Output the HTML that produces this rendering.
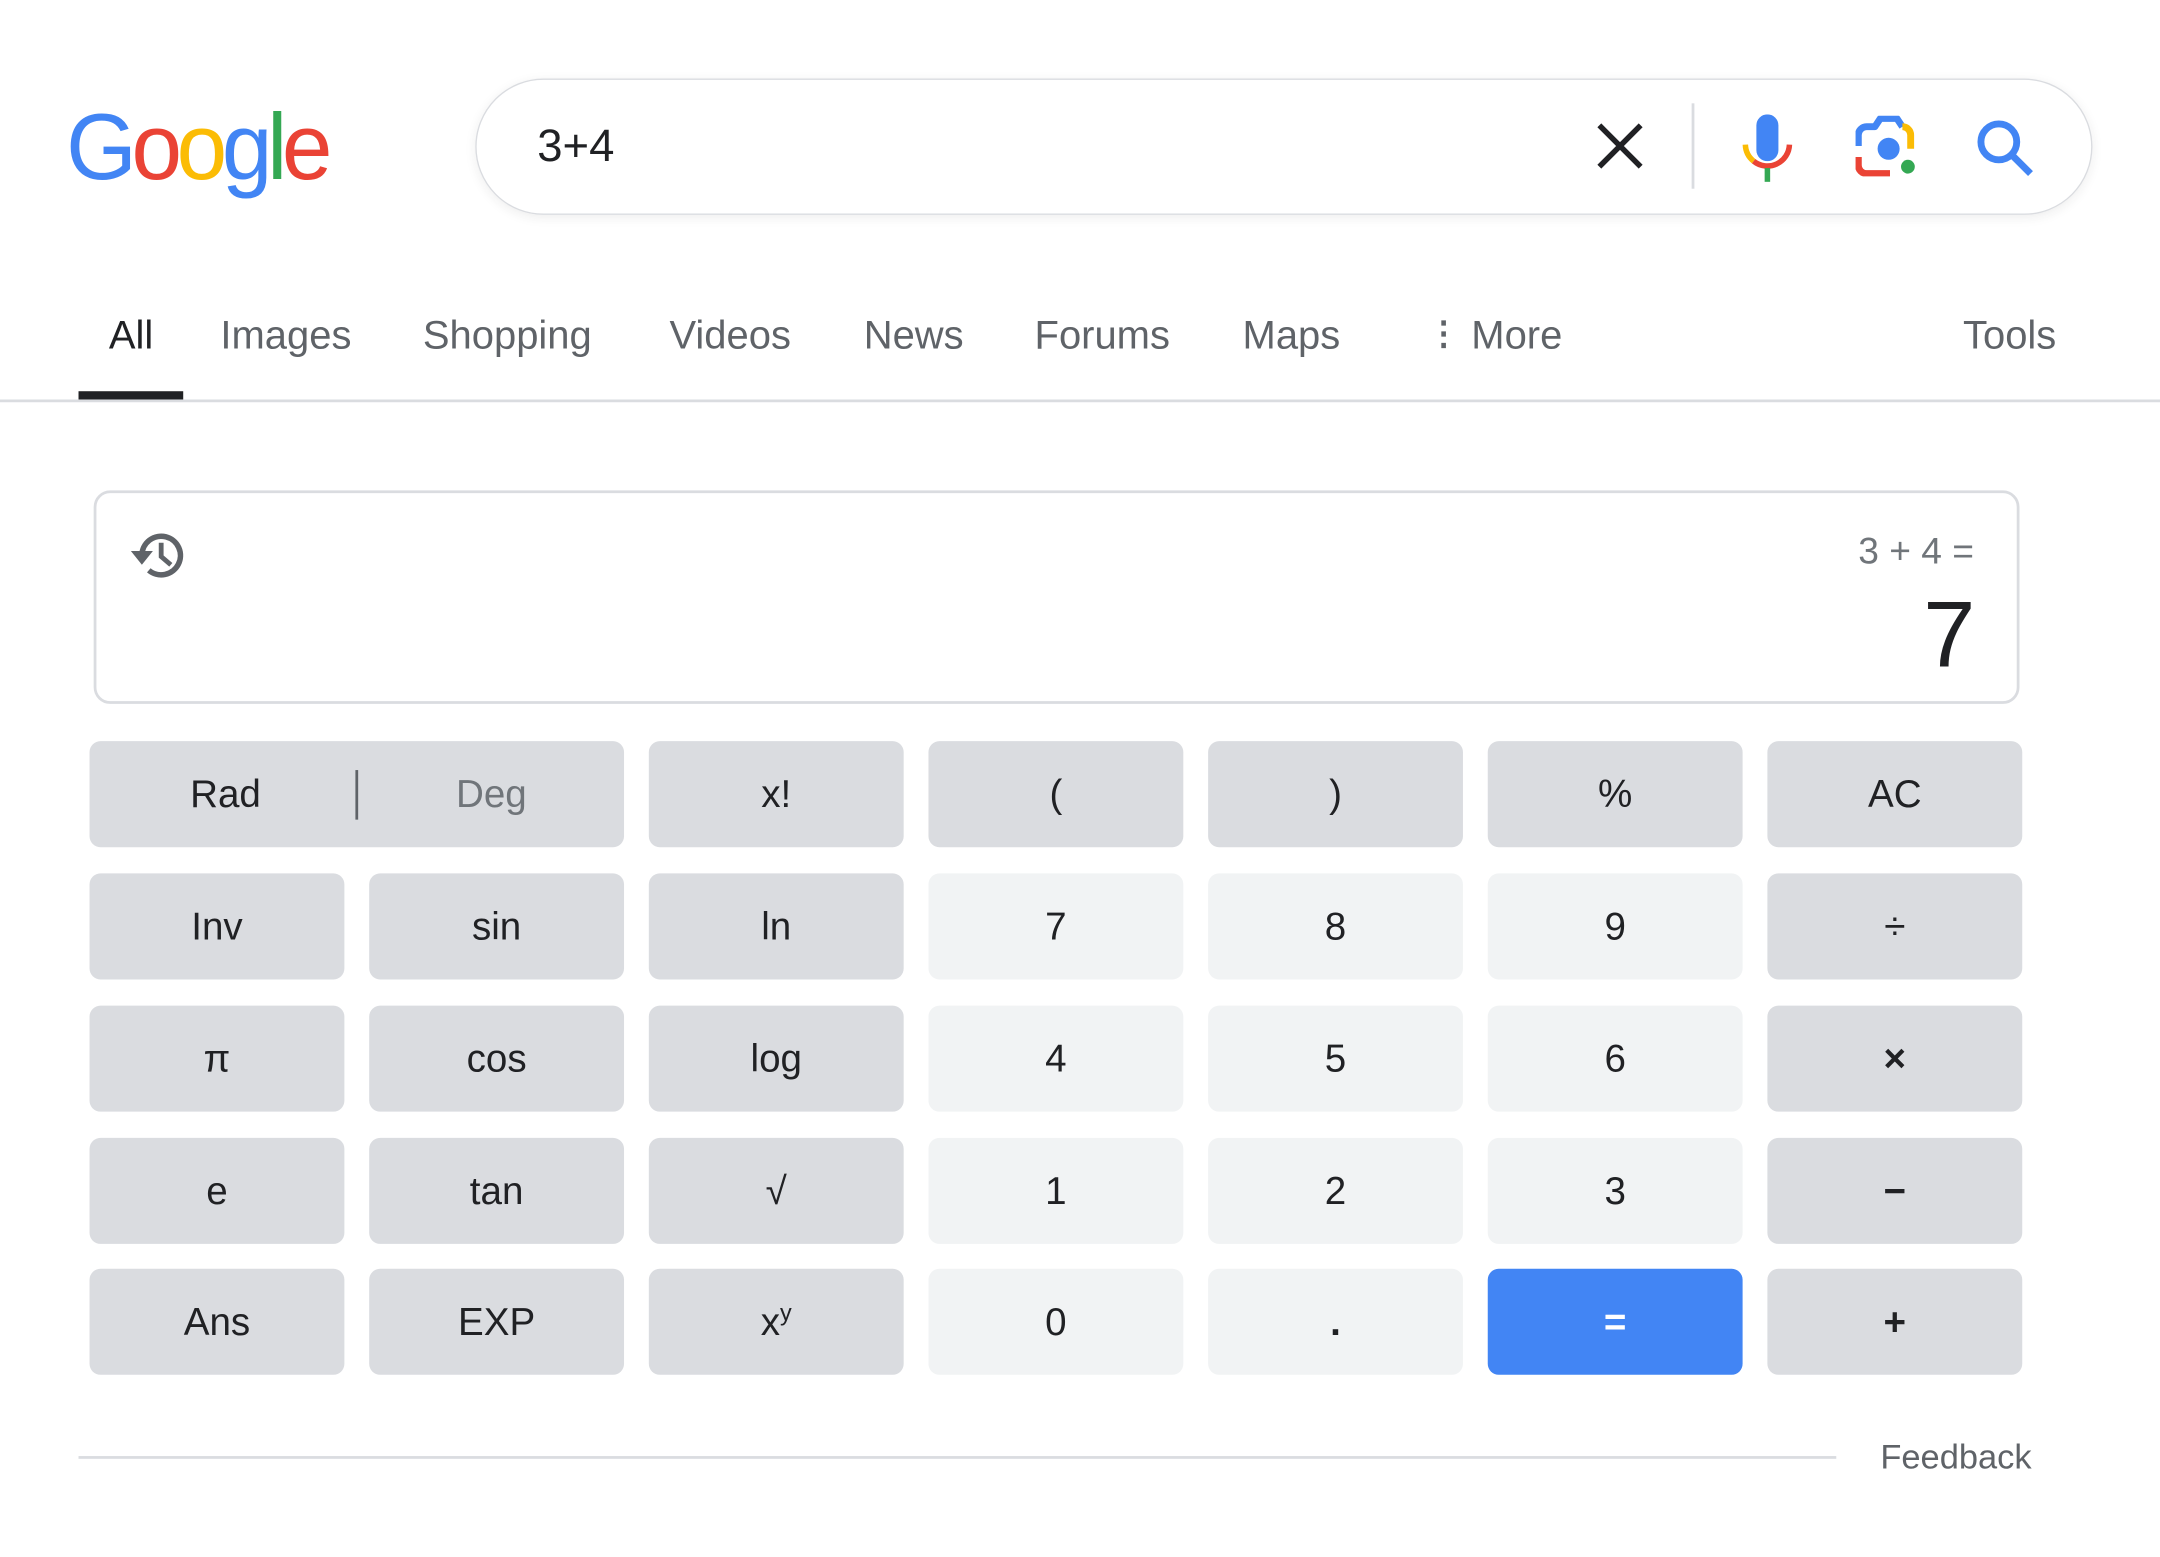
<!DOCTYPE html>
<html><head><meta charset="utf-8"><style>
html,body{margin:0;padding:0;background:#fff;width:2160px;height:1557px;overflow:hidden}
#w{position:absolute;left:0;top:0;width:1568px;height:1130px;transform:scale(1.377551);transform-origin:0 0;font-family:"Liberation Sans",Arial,sans-serif}
.a{position:absolute}
.b{position:absolute;width:185px;height:77px;line-height:77px;border-radius:8px;background:#dadce0;color:#202124;font-size:28px;text-align:center}
.l{background:#f1f3f4}
.tab{position:absolute;top:228px;font-size:29px;color:#5f6368}
</style></head><body><div id="w">
<div class="a" style="left:48px;top:62px;font-size:68px;letter-spacing:-4px;line-height:90px;transform:scaleX(0.97);transform-origin:0 0"><span style="color:#4285f4">G</span><span style="color:#ea4335">o</span><span style="color:#fbbc05">o</span><span style="color:#4285f4">g</span><span style="color:#34a853">l</span><span style="color:#ea4335">e</span></div>
<div class="a" style="left:345px;top:57px;width:1172px;height:97px;border:1px solid #dadce0;border-radius:50px;box-shadow:0 2px 8px rgba(32,33,36,.08)"></div>
<div class="a" style="left:390px;top:87px;font-size:33px;color:#202124">3+4</div>
<svg class="a" style="left:1158px;top:88px" width="36" height="36" viewBox="0 0 36 36"><path d="M3 3L33 33M33 3L3 33" stroke="#202124" stroke-width="4"/></svg>
<div class="a" style="left:1228px;top:75px;width:2px;height:62px;background:#dadce0"></div>
<svg class="a" style="left:1264px;top:83px" width="38" height="50" viewBox="0 0 38 50"><rect x="11" y="0" width="16" height="34" rx="8" fill="#4285f4"/><path d="M3 22a16 16 0 0 0 6 12" stroke="#fbbc05" stroke-width="4" fill="none"/><path d="M9 34a16 16 0 0 0 26-12" stroke="#ea4335" stroke-width="4" fill="none"/><rect x="17" y="39" width="4" height="10" fill="#34a853"/></svg>
<svg class="a" style="left:1347px;top:84px" width="46" height="44" viewBox="0 0 46 44"><path d="M2 30v6a6 6 0 0 0 6 6h17" stroke="#ea4335" stroke-width="5" fill="none"/><path d="M2 22V14a6 6 0 0 1 6-6h6l4-6h12l4 6" stroke="#4285f4" stroke-width="5" fill="none" stroke-linejoin="round"/><path d="M34 8a6 6 0 0 1 6 6v10" stroke="#fbbc05" stroke-width="5" fill="none"/><circle cx="24" cy="24" r="8" fill="#4285f4"/><circle cx="38" cy="37" r="5" fill="#34a853"/></svg>
<svg class="a" style="left:1434px;top:86px" width="44" height="44" viewBox="0 0 44 44"><circle cx="17" cy="17" r="13" stroke="#4285f4" stroke-width="5" fill="none"/><path d="M27 27L40 40" stroke="#4285f4" stroke-width="5"/></svg>
<div class="tab" style="left:79px;color:#202124">All</div>
<div class="tab" style="left:160px">Images</div>
<div class="tab" style="left:307px">Shopping</div>
<div class="tab" style="left:486px">Videos</div>
<div class="tab" style="left:627px">News</div>
<div class="tab" style="left:751px">Forums</div>
<div class="tab" style="left:902px">Maps</div>
<div class="tab" style="left:1036px"><span style="font-weight:bold;font-size:24px;position:relative;top:-3px">&#8942;</span>&nbsp;More</div>
<div class="tab" style="left:1425px">Tools</div>
<div class="a" style="left:57px;top:284px;width:76px;height:6px;background:#202124"></div>
<div class="a" style="left:0;top:290px;width:1568px;height:2px;background:#dadce0"></div>
<div class="a" style="left:68px;top:356px;width:1394px;height:151px;border:2px solid #dadce0;border-radius:12px"></div>
<svg class="a" style="left:93px;top:381px" width="46" height="44" viewBox="0 0 46 44"><path d="M10 22a14 14 0 1 1 5 11" stroke="#5f6368" stroke-width="4" fill="none"/><path d="M2 19h16l-8 10z" fill="#5f6368"/><path d="M24 13v10l7 6" stroke="#5f6368" stroke-width="3.5" fill="none"/></svg>
<div class="a" style="right:135px;top:385px;font-size:27px;color:#70757a">3 + 4 =</div>
<div class="a" style="right:134px;top:422px;font-size:68px;color:#202124">7</div>
<div class="b" style="left:65px;top:538px;width:388px"><span style="position:absolute;left:73px;top:0">Rad</span><span style="position:absolute;left:193px;top:21px;width:2px;height:36px;background:#5f6368"></span><span style="position:absolute;left:266px;top:0;color:#70757a">Deg</span></div>
<div class="b" style="left:471px;top:538px">x!</div>
<div class="b" style="left:674px;top:538px">(</div>
<div class="b" style="left:877px;top:538px">)</div>
<div class="b" style="left:1080px;top:538px">%</div>
<div class="b" style="left:1283px;top:538px">AC</div>
<div class="b" style="left:65px;top:634px">Inv</div>
<div class="b" style="left:268px;top:634px">sin</div>
<div class="b" style="left:471px;top:634px">ln</div>
<div class="b l" style="left:674px;top:634px">7</div>
<div class="b l" style="left:877px;top:634px">8</div>
<div class="b l" style="left:1080px;top:634px">9</div>
<div class="b" style="left:1283px;top:634px">÷</div>
<div class="b" style="left:65px;top:730px">π</div>
<div class="b" style="left:268px;top:730px">cos</div>
<div class="b" style="left:471px;top:730px">log</div>
<div class="b l" style="left:674px;top:730px">4</div>
<div class="b l" style="left:877px;top:730px">5</div>
<div class="b l" style="left:1080px;top:730px">6</div>
<div class="b" style="left:1283px;top:730px;font-weight:bold">×</div>
<div class="b" style="left:65px;top:826px">e</div>
<div class="b" style="left:268px;top:826px">tan</div>
<div class="b" style="left:471px;top:826px">√</div>
<div class="b l" style="left:674px;top:826px">1</div>
<div class="b l" style="left:877px;top:826px">2</div>
<div class="b l" style="left:1080px;top:826px">3</div>
<div class="b" style="left:1283px;top:826px;font-weight:bold">−</div>
<div class="b" style="left:65px;top:921px">Ans</div>
<div class="b" style="left:268px;top:921px">EXP</div>
<div class="b" style="left:471px;top:921px">x<sup style="font-size:17px;line-height:0">y</sup></div>
<div class="b l" style="left:674px;top:921px">0</div>
<div class="b l" style="left:877px;top:921px;font-weight:bold">.</div>
<div class="b" style="left:1080px;top:921px;background:#4285f4;color:#fff;font-weight:bold">=</div>
<div class="b" style="left:1283px;top:921px;font-weight:bold">+</div>
<div class="a" style="left:57px;top:1057px;width:1276px;height:2px;background:#dadce0"></div>
<div class="a" style="left:1365px;top:1044px;font-size:25px;color:#5f6368">Feedback</div>
</div></body></html>
